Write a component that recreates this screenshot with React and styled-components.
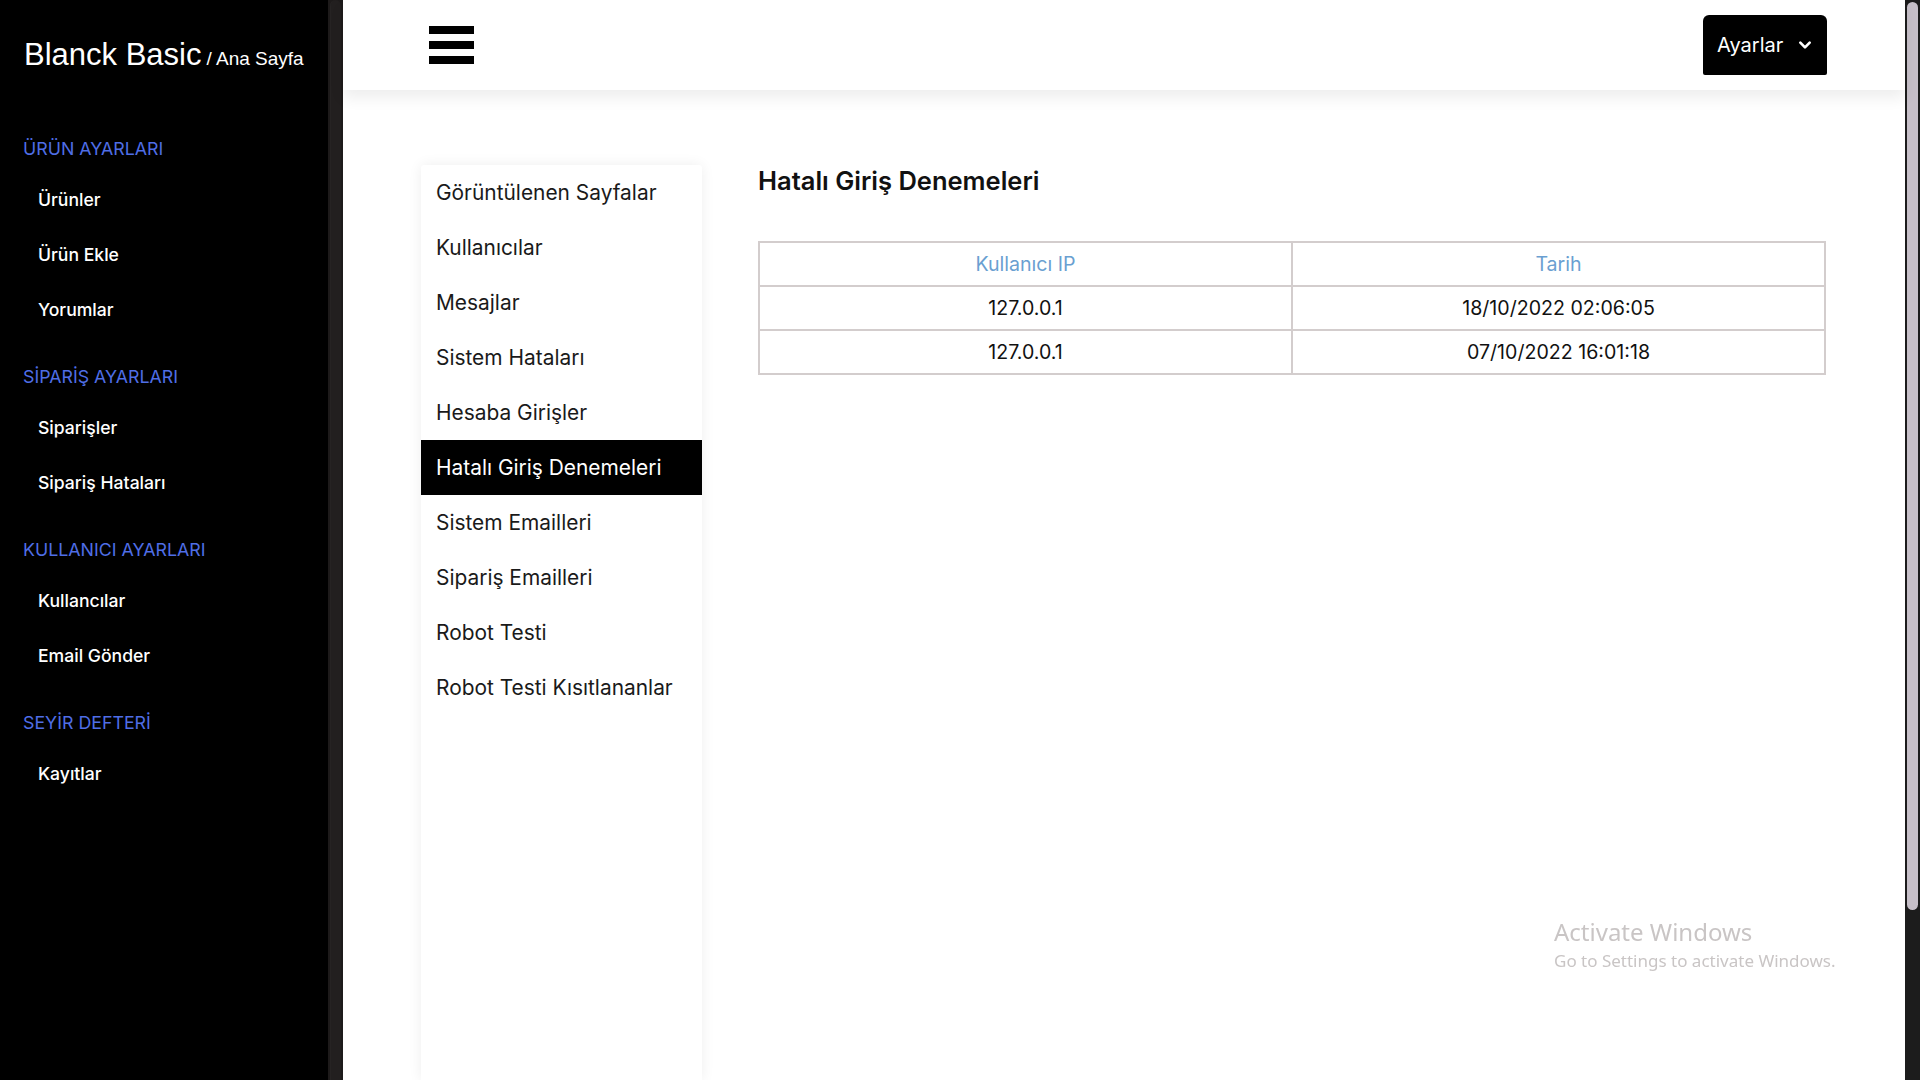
import React from 'react';
import styled, { createGlobalStyle } from 'styled-components';

const GlobalStyle = createGlobalStyle`
  html, body {
    margin: 0;
    padding: 0;
    height: 100%;
    overflow: hidden;
    background: #fff;
  }
  body {
    font-family: Inter, 'Noto Sans', sans-serif;
  }
  * { box-sizing: border-box; }
`;

const Shell = styled.div`
  display: flex;
  height: 100vh;
  width: 100vw;
`;

const Sidebar = styled.aside`
  width: 328px;
  flex: none;
  background: #000;
  color: #fff;
  padding-left: 23px;
`;

const Brand = styled.div`
  height: 110px;
  display: flex;
  align-items: center;
  padding-left: 1px;
  font-family: 'Liberation Sans', Arial, sans-serif;
  white-space: nowrap;
`;

const BrandName = styled.span`
  font-size: 31px;
`;

const BrandCrumb = styled.span`
  font-size: 19px;
  margin-left: 5px;
  margin-top: 7px;
`;

const Section = styled.div`
  margin-top: ${(p) => (p.$first ? '27px' : '28.5px')};
`;

const SectionTitle = styled.div`
  height: 24px;
  line-height: 24px;
  font-size: 17.8px;
  color: #4f6ee6;
  margin-bottom: 10.5px;
`;

const SideLink = styled.div`
  height: 55px;
  line-height: 55px;
  padding-left: 15px;
  font-size: 17.6px;
  font-weight: 500;
  color: #fff;
`;

const SideScroll = styled.div`
  width: 15px;
  flex: none;
  background: #1d1a1a;
  padding: 0 2px;
  display: flex;
`;

const SideThumb = styled.div`
  flex: 1;
  background: #221f1f;
  border-radius: 6px 6px 0 0;
  border-left: 1px solid #262323;
`;

const Main = styled.div`
  flex: 1;
  display: flex;
  flex-direction: column;
  min-width: 0;
`;

const Header = styled.header`
  height: 90px;
  flex: none;
  background: #fff;
  display: flex;
  align-items: center;
  justify-content: space-between;
  padding: 0 78px 0 86px;
  box-shadow: 0 8px 14px rgba(0, 0, 0, 0.07);
  position: relative;
  z-index: 1;
`;

const Burger = styled.div`
  width: 45px;
  display: flex;
  flex-direction: column;
  gap: 7px;
`;

const BurgerBar = styled.span`
  display: block;
  height: 8px;
  background: #000;
`;

const SettingsButton = styled.button`
  width: 124px;
  height: 60px;
  background: #000;
  color: #fff;
  border: none;
  border-radius: 6px 6px 2px 2px;
  display: flex;
  align-items: center;
  justify-content: space-between;
  padding: 0 14px 0 14px;
  font-family: Inter, sans-serif;
  font-size: 20px;
  cursor: pointer;
`;

const Content = styled.div`
  flex: 1;
  display: flex;
  gap: 56px;
  padding: 75px 79px 0 78px;
  min-height: 0;
`;

const SubMenu = styled.nav`
  width: 281px;
  flex: none;
  background: #fff;
  box-shadow: 0 0 14px rgba(0, 0, 0, 0.07);
  border-radius: 3px 3px 0 0;
`;

const SubItem = styled.div`
  height: 55px;
  line-height: 55px;
  padding-left: 15px;
  font-size: 20.9px;
  color: ${(p) => (p.$active ? '#fff' : '#1a1a1a')};
  background: ${(p) => (p.$active ? '#000' : 'transparent')};
  white-space: nowrap;
`;

const Panel = styled.section`
  flex: 1;
  min-width: 0;
`;

const PageTitle = styled.h1`
  margin: 0 0 44px 0;
  height: 32px;
  line-height: 32px;
  font-size: 25.5px;
  font-weight: 600;
  color: #111;
`;

const Table = styled.table`
  width: 100%;
  border-collapse: collapse;
  table-layout: fixed;
  border: 2px solid #d3cdcd;
`;

const Th = styled.th`
  height: 44px;
  border: 2px solid #d3cdcd;
  font-size: 19.6px;
  font-weight: 400;
  color: #6a9fd1;
  text-align: center;
`;

const Td = styled.td`
  height: 44px;
  border: 2px solid #d3cdcd;
  font-size: 19.6px;
  color: #111;
  text-align: center;
`;

const ScrollTrack = styled.div`
  width: 15px;
  flex: none;
  background: #1c1c1c;
  padding: 2px 2px 0 2px;
`;

const ScrollThumb = styled.div`
  height: 908px;
  background: #c6bfc8;
  border-radius: 6px;
`;

const Watermark = styled.div`
  position: fixed;
  left: 1554px;
  top: 915px;
  font-family: 'Noto Sans', 'Open Sans', sans-serif;
  color: #c9c5c5;
  pointer-events: none;
`;

const WatermarkTitle = styled.div`
  font-size: 24px;
  line-height: 34px;
`;

const WatermarkText = styled.div`
  font-size: 17px;
  line-height: 24px;
`;

const sections = [
  { title: 'ÜRÜN AYARLARI', links: ['Ürünler', 'Ürün Ekle', 'Yorumlar'] },
  { title: 'SİPARİŞ AYARLARI', links: ['Siparişler', 'Sipariş Hataları'] },
  { title: 'KULLANICI AYARLARI', links: ['Kullancılar', 'Email Gönder'] },
  { title: 'SEYİR DEFTERİ', links: ['Kayıtlar'] },
];

const subItems = [
  'Görüntülenen Sayfalar',
  'Kullanıcılar',
  'Mesajlar',
  'Sistem Hataları',
  'Hesaba Girişler',
  'Hatalı Giriş Denemeleri',
  'Sistem Emailleri',
  'Sipariş Emailleri',
  'Robot Testi',
  'Robot Testi Kısıtlananlar',
];

const attempts = [
  { ip: '127.0.0.1', date: '18/10/2022 02:06:05' },
  { ip: '127.0.0.1', date: '07/10/2022 16:01:18' },
];

function ChevronDown() {
  return (
    <svg width="16" height="16" viewBox="0 0 24 24" fill="none" stroke="#fff" strokeWidth="4" strokeLinecap="round" strokeLinejoin="round">
      <polyline points="5 8.5 12 15.5 19 8.5" />
    </svg>
  );
}

export default function App() {
  const active = 'Hatalı Giriş Denemeleri';

  return (
    <>
      <GlobalStyle />
      <Shell>
        <Sidebar>
          <Brand>
            <BrandName>Blanck Basic</BrandName>
            <BrandCrumb>/ Ana Sayfa</BrandCrumb>
          </Brand>
          {sections.map((s, i) => (
            <Section key={s.title} $first={i === 0}>
              <SectionTitle>{s.title}</SectionTitle>
              {s.links.map((l) => (
                <SideLink key={l}>{l}</SideLink>
              ))}
            </Section>
          ))}
        </Sidebar>
        <SideScroll>
          <SideThumb />
        </SideScroll>
        <Main>
          <Header>
            <Burger>
              <BurgerBar />
              <BurgerBar />
              <BurgerBar />
            </Burger>
            <SettingsButton>
              Ayarlar <ChevronDown />
            </SettingsButton>
          </Header>
          <Content>
            <SubMenu>
              {subItems.map((item) => (
                <SubItem key={item} $active={item === active}>{item}</SubItem>
              ))}
            </SubMenu>
            <Panel>
              <PageTitle>Hatalı Giriş Denemeleri</PageTitle>
              <Table>
                <thead>
                  <tr>
                    <Th>Kullanıcı IP</Th>
                    <Th>Tarih</Th>
                  </tr>
                </thead>
                <tbody>
                  {attempts.map((a, i) => (
                    <tr key={i}>
                      <Td>{a.ip}</Td>
                      <Td>{a.date}</Td>
                    </tr>
                  ))}
                </tbody>
              </Table>
            </Panel>
          </Content>
        </Main>
        <ScrollTrack>
          <ScrollThumb />
        </ScrollTrack>
      </Shell>
      <Watermark>
        <WatermarkTitle>Activate Windows</WatermarkTitle>
        <WatermarkText>Go to Settings to activate Windows.</WatermarkText>
      </Watermark>
    </>
  );
}
